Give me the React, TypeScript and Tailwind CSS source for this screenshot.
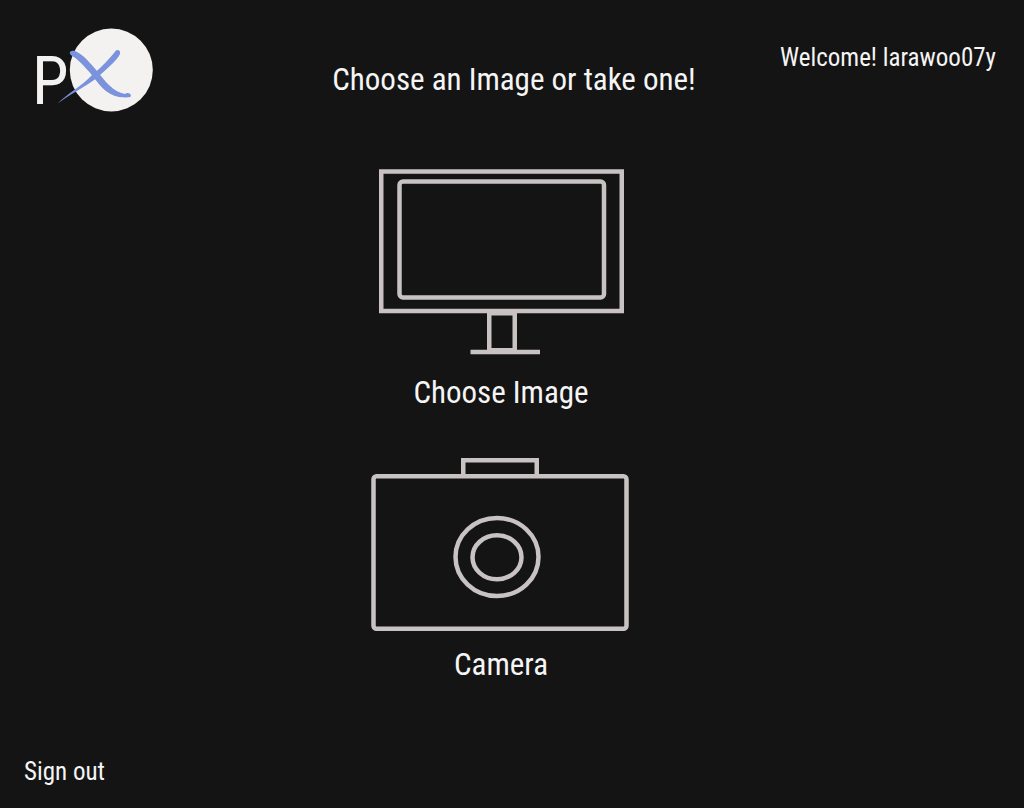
function Logo() {
  return (
    <svg viewBox="32 22 124 102" className="h-[102px] w-[124px] shrink-0" role="img" aria-label="PX">
      <circle cx="111.300" cy="70" r="41.500" fill="#f4f2f1" />
      <text x="32" y="104" fontSize="66" fill="#f4f2f1" className="font-['Roboto_Condensed','Liberation_Sans',sans-serif] font-normal">
        P
      </text>
      <g fill="#7b92dc">
        <path d="M70 54C69 51 72 50.500 75 51C83 54 91 64 97 71C105 81 113 92 125 94C127 92 131 93 131 96C130 98 125 97.500 119 97C106 95 98 83 91 74C85 67 78 59 72 56Z" />
        <path d="M58 103C67 94 82 86 92 75C103 66 110 58 115.500 51C117 49 121 50 120 54C117 61 105 70 98 77C85 87 69 95 59 102.500Z" />
      </g>
    </svg>
  );
}

function MonitorIcon() {
  return (
    <svg viewBox="379 169 245 186" className="h-[186px] w-[245px]" fill="none" stroke="#c9c2c2" strokeWidth="4.500" aria-hidden="true">
      <rect x="381.250" y="171.500" width="240.500" height="139.500" />
      <rect x="399.500" y="181.500" width="204.500" height="116" rx="3.500" />
      <rect x="489.250" y="313.250" width="25.500" height="37" />
      <path d="M470.500 352H540" />
    </svg>
  );
}

function CameraIcon() {
  return (
    <svg viewBox="371 458 260 173" className="h-[173px] w-[260px]" fill="none" stroke="#c9c2c2" strokeWidth="4.500" aria-hidden="true">
      <path d="M463.250 476V460.250H536.750V476" />
      <rect x="373.500" y="476.250" width="253" height="152.500" rx="3" />
      <ellipse cx="497" cy="557" rx="41.500" ry="39" />
      <ellipse cx="497" cy="557.300" rx="24.500" ry="22" />
    </svg>
  );
}

export default function App() {
  return (
    <div className="flex min-h-screen flex-col bg-[#141414] font-['Roboto_Condensed','Liberation_Sans',sans-serif] font-normal text-[#f5f5f5]">
      <header className="grid grid-cols-[1fr_auto_1fr] items-start pt-[22px] pr-7 pl-8">
        <Logo />
        <h1 className="pt-9 text-[31px] leading-11 whitespace-nowrap">Choose an Image or take one!</h1>
        <p className="justify-self-end pt-5 text-[25px] leading-8 whitespace-nowrap">Welcome! larawoo07y</p>
      </header>

      <main className="flex flex-1 flex-col items-center gap-[43px] pt-[45px] pr-[22px]">
        <button type="button" className="flex cursor-pointer flex-col items-center gap-4">
          <MonitorIcon />
          <span className="text-[31px] leading-11">Choose Image</span>
        </button>
        <button type="button" className="flex cursor-pointer flex-col items-center gap-3">
          <CameraIcon />
          <span className="text-[31px] leading-11">Camera</span>
        </button>
      </main>

      <footer className="px-6 pb-5">
        <button type="button" className="cursor-pointer text-[25px] leading-8">Sign out</button>
      </footer>
    </div>
  );
}
